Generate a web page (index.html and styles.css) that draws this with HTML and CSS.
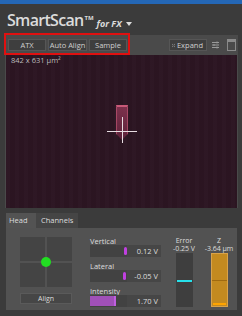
FILE: index.html
```html
<!DOCTYPE html>
<html>
<head>
<meta charset="utf-8">
<link rel="stylesheet" href="styles.css">
</head>
<body>
<div class="app">
  <div class="blue"></div>
  <div class="title"><span class="brand">SmartScan</span><span class="tm">TM</span><span class="forfx">for FX</span><span class="caret"></span></div>
  <div class="viewer">
    <div class="toolbar">
      <div class="btns">
        <div class="btn atx">ATX</div>
        <div class="btn aa">Auto Align</div>
        <div class="btn smp">Sample</div>
      </div>
      <div class="tools">
        <div class="btn expand">
          <svg width="9" height="9" viewBox="0 0 9 9"><path d="M1 3.5V1h2.5M1 1l2.5 2.5M8 5.5V8H5.5M8 8L5.5 5.5M5.5 1H8v2.5M8 1L5.5 3.5M3.5 8H1V5.5M1 8l2.5-2.5" stroke="#bdbdbd" stroke-width="1" fill="none"/></svg>
          <span>Expand</span>
        </div>
        <svg class="ico" width="9" height="10" viewBox="0 0 9 10"><path d="M1 2.5h7M1 5h7M1 7.5h7" stroke="#9a9a9a" stroke-width="1"/><path d="M6 1.5v2M3 4v2M6 6.5v2" stroke="#9a9a9a" stroke-width="1"/></svg>
        <svg class="ico win" width="9" height="12" viewBox="0 0 9 12"><rect x="0.5" y="0.5" width="8" height="11" fill="#4a4a4a" stroke="#8a8a8a"/><rect x="1" y="1" width="7" height="2" fill="#8a8a8a"/></svg>
      </div>
    </div>
    <div class="image">
      <div class="dims">842 x 631 µm²</div>
      <div class="marker"></div>
      <div class="cross-h"></div>
      <div class="cross-v"></div>
    </div>
  </div>
  <div class="redbox"></div>
  <div class="lower">
    <div class="tabs">
      <div class="tab active">Head</div>
      <div class="tab">Channels</div>
    </div>
    <div class="panel">
      <div class="head">
        <div class="grid">
          <div class="cell"></div><div class="cell"></div><div class="cell"></div><div class="cell"></div>
          <div class="dot"></div>
        </div>
        <div class="align">Align</div>
      </div>
      <div class="channels">
        <div class="lbl">Vertical</div>
        <div class="meter"><div class="track"><div class="tick" style="left:34px"></div></div><div class="val">0.12 V</div></div>
        <div class="lbl">Lateral</div>
        <div class="meter"><div class="track"><div class="tick" style="left:33px"></div></div><div class="val">-0.05 V</div></div>
        <div class="lbl">Intensity</div>
        <div class="meter"><div class="track"><div class="fill" style="width:26px"></div></div><div class="val">1.70 V</div></div>
      </div>
      <div class="gauge err">
        <div class="glbl">Error</div>
        <div class="gval">-0.25 V</div>
        <div class="gbar"><div class="cyan"></div></div>
      </div>
      <div class="gauge z">
        <div class="glbl">Z</div>
        <div class="gval">-3.64 µm</div>
        <div class="gbar orange"><div class="mid"></div><div class="bot"></div></div>
      </div>
    </div>
  </div>
</div>
</body>
</html>
```

FILE: styles.css
```css
* { box-sizing: border-box; }
html, body { margin: 0; padding: 0; }
body { width: 242px; height: 316px; overflow: hidden; background: #333; font-family: "Open Sans", "DejaVu Sans", sans-serif; color: #cfcfcf; }
.app { position: relative; width: 242px; height: 316px; background: #3b3b3b; display: flex; flex-direction: column; }
.blue { height: 4px; background: #2467b6; }
.title { height: 31px; padding: 5px 0 0 7px; display: flex; align-items: flex-start; color: #dcdcdc; white-space: nowrap; }
.brand { font-size: 16px; font-weight: 600; line-height: 22px; letter-spacing: -0.7px; }
.tm { font-size: 6px; font-weight: 700; margin: 5px 0 0 1px; line-height: 8px; }
.forfx { font-size: 9px; font-weight: 700; font-style: italic; margin: 10px 0 0 3px; line-height: 10px; }
.caret { width: 0; height: 0; border-left: 3.5px solid transparent; border-right: 3.5px solid transparent; border-top: 4px solid #dcdcdc; margin: 13px 0 0 4px; }
.viewer { margin: 0 4px 0 5px; background: #4a4a4a; padding: 0 1px 0 1px; }
.toolbar { height: 20px; display: flex; align-items: center; justify-content: space-between; padding: 0 1px 0 2px; }
.btns { display: flex; gap: 2px; }
.btn { height: 12px; background: #3e3e3e; border: 1px solid #565656; font-size: 7.5px; line-height: 10px; text-align: center; color: #cfcfcf; }
.atx { width: 38px; }
.aa { width: 39px; }
.smp { width: 38px; }
.tools { display: flex; align-items: center; gap: 4px; }
.expand { display: flex; align-items: center; gap: 2px; padding: 0 3px 0 2px; width: 38px; }
.ico.win { margin-left: 3px; }
.image { position: relative; height: 153px; background: #2c1522; background-image: repeating-linear-gradient(90deg, rgba(255,255,255,0.012) 0 4px, rgba(0,0,0,0.02) 4px 9px); }
.dims { font-size: 7.5px; color: #bbb; padding: 1px 0 0 5px; line-height: 9px; }
.marker { position: absolute; left: 110px; top: 50px; width: 12px; height: 35px; background: linear-gradient(rgba(190,70,110,0.55), rgba(150,50,85,0.45)); border-top: 2px solid #c85a78; border-left: 1px solid rgba(200,90,120,0.6); border-right: 1px solid rgba(200,90,120,0.6); clip-path: polygon(0 0, 100% 0, 100% 82%, 50% 100%, 0 82%); }
.cross-h { position: absolute; left: 101px; top: 76px; width: 30px; height: 1px; background: #e8dde2; }
.cross-v { position: absolute; left: 116px; top: 62px; width: 1px; height: 26px; background: #e8dde2; }
.redbox { position: absolute; left: 4px; top: 33px; width: 126px; height: 22px; border: 2px solid #e01010; }
.lower { margin: 5px 5px 0 6px; }
.tabs { display: flex; height: 15px; }
.tab { font-size: 7.5px; line-height: 15px; padding: 0 4px; color: #ddd; background: #454545; }
.tab.active { background: #535353; width: 30px; padding-left: 3px; }
.tab:not(.active) { width: 42px; padding-left: 5px; }
.panel { height: 82px; background: #525252; display: flex; padding: 9px 0 0 14px; }
.head { width: 52px; }
.grid { position: relative; display: grid; grid-template-columns: 25px 25px; grid-template-rows: 24px 24px; gap: 2px; }
.cell { background: #444; }
.dot { position: absolute; left: 21px; top: 20px; width: 10px; height: 10px; border-radius: 50%; background: #22dd22; }
.align { margin-top: 6px; height: 11px; background: #464646; border: 1px solid #5a5a5a; font-size: 7px; line-height: 9px; text-align: center; color: #ddd; }
.channels { margin-left: 18px; width: 72px; }
.lbl { font-size: 7.5px; line-height: 8px; height: 8px; color: #ddd; }
.meter { display: flex; height: 12px; margin: 0 0 5px 0; }
.track { position: relative; width: 37px; background: #424242; }
.tick { position: absolute; top: 2px; width: 3px; height: 8px; border-radius: 2px; background: #c040e0; }
.fill { position: absolute; left: 0; top: 1px; bottom: 1px; background: #a050b8; border-right: 2px solid #c060e0; }
.val { width: 34px; background: #464646; font-size: 7.5px; line-height: 12px; text-align: right; padding-right: 3px; color: #ddd; }
.gauge { display: flex; flex-direction: column; align-items: center; }
.err { margin-left: 8px; width: 28px; }
.z { margin-left: 4px; width: 34px; }
.glbl, .gval { font-size: 7px; line-height: 8px; height: 8px; color: #ddd; white-space: nowrap; }
.gbar { position: relative; width: 17px; height: 54px; margin-top: 0; background: #3e3e3e; }
.cyan { position: absolute; left: 1px; right: 1px; top: 27px; height: 2px; background: #27e0ea; }
.orange { background: #c38a20; border: 1px solid #d9a24a; }
.mid { position: absolute; left: 0; right: 0; top: 26px; height: 1px; background: #a06a10; }
.bot { position: absolute; left: 1px; right: 1px; bottom: 1px; height: 2px; background: #ffa400; }
```
